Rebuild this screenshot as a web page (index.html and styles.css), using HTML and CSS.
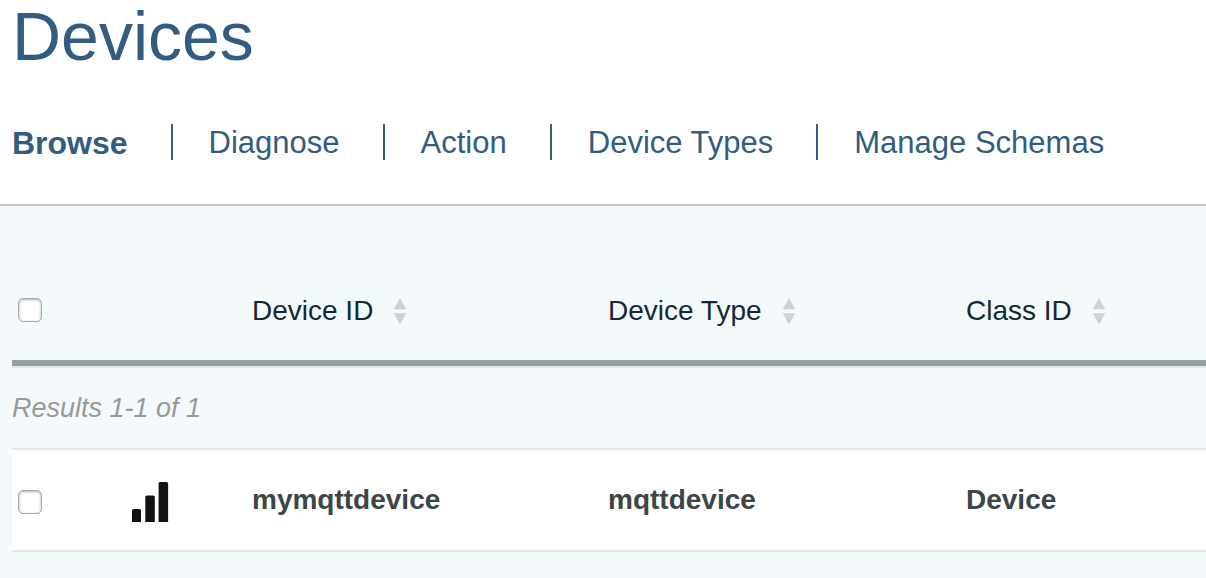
FILE: index.html
```html
<!DOCTYPE html>
<html lang="en">
<head>
<meta charset="utf-8">
<title>Devices</title>
<link rel="stylesheet" href="styles.css">
</head>
<body>
<header class="header">
  <h1 class="title">Devices</h1>
  <nav class="tabs" aria-label="Devices">
    <a class="tab tab-active" href="#browse">Browse</a>
    <a class="tab" href="#diagnose">Diagnose</a>
    <a class="tab" href="#action">Action</a>
    <a class="tab" href="#types">Device Types</a>
    <a class="tab" href="#schemas">Manage Schemas</a>
  </nav>
</header>
<main class="content">
  <table class="devices">
    <colgroup><col class="col-check"><col class="col-icon"><col class="col-id"><col class="col-type"><col></colgroup>
    <thead>
      <tr>
        <th><input class="check" type="checkbox" aria-label="Select all devices"></th>
        <th></th>
        <th><button class="sort">Device ID <svg class="arrows" viewBox="0 0 14 28" aria-hidden="true"><path d="M7 1l6.3 11.3H.7zM7 27.5l6.3-11.2H.7z"/></svg></button></th>
        <th><button class="sort">Device Type <svg class="arrows" viewBox="0 0 14 28" aria-hidden="true"><path d="M7 1l6.3 11.3H.7zM7 27.5l6.3-11.2H.7z"/></svg></button></th>
        <th><button class="sort">Class ID <svg class="arrows" viewBox="0 0 14 28" aria-hidden="true"><path d="M7 1l6.3 11.3H.7zM7 27.5l6.3-11.2H.7z"/></svg></button></th>
      </tr>
    </thead>
    <tbody>
      <tr class="summary"><td colspan="5">Results 1-1 of 1</td></tr>
      <tr class="device">
        <td><input class="check" type="checkbox" aria-label="Select mymqttdevice"></td>
        <td><svg class="signal" viewBox="0 0 38 42" aria-hidden="true"><path d="M0 41V29.500q0-1.500 1.500-1.500h6q1.500 0 1.500 1.500V41zM13.300 41V16q0-1.500 1.500-1.500h6.500q1.500 0 1.500 1.500v25zM26.600 41V2.500Q26.600 1 28.100 1h6.500q1.500 0 1.500 1.500V41z"/></svg></td>
        <td>mymqttdevice</td>
        <td>mqttdevice</td>
        <td>Device</td>
      </tr>
    </tbody>
  </table>
</main>
</body>
</html>
```
FILE: styles.css
```css
* { box-sizing: border-box; }
body {
  margin: 0;
  min-height: 100vh;
  background: #f4f9fc;
  font-family: "Liberation Sans", Arial, sans-serif;
}
.header {
  padding: 0 12px 44px;
  background: #fff;
  border-bottom: 2px solid #c8c8c8;
}
.title {
  margin: 0;
  padding-bottom: 52px;
  font-size: 68px;
  line-height: 72px;
  font-weight: 400;
  color: #325c80;
}
.tabs { display: flex; }
.tab {
  padding-top: 2px;
  font-size: 31px;
  line-height: 34px;
  color: #325c80;
  text-decoration: none;
  white-space: nowrap;
}
.tab + .tab {
  margin-left: 43px;
  padding-left: 36px;
  border-left: 2px solid #325c80;
}
.tab-active {
  font-size: 32px;
  font-weight: 700;
}
.content { padding: 54px 0 0 12px; }
.devices {
  width: 100%;
  table-layout: fixed;
  border-collapse: separate;
  border-spacing: 0;
}
.col-check { width: 120px; }
.col-icon { width: 120px; }
.col-id { width: 356px; }
.col-type { width: 358px; }
th, td { padding: 0; text-align: left; }
th {
  height: 106px;
  border-bottom: 6px solid #96a0a0;
}
.sort {
  display: flex;
  align-items: center;
  gap: 20px;
  padding: 2px 0 0;
  border: 0;
  background: none;
  font: inherit;
  font-size: 28px;
  font-weight: 400;
  line-height: 36px;
  color: #152935;
}
.arrows { width: 14px; height: 28px; fill: #ced2d2; }
.check {
  appearance: none;
  display: block;
  width: 24px;
  height: 24px;
  margin: 0 0 0 6px;
  border: 1px solid #a9a9a9;
  border-radius: 5px;
  background: #fff;
  box-shadow: inset 0 1px 3px #b0b0b0;
}
.summary td {
  height: 82px;
  border-top: 2px solid #e6e6e6;
  font-size: 27px;
  font-style: italic;
  color: #999;
}
.device td {
  height: 104px;
  background: #fff;
  border-top: 2px solid #e6e6e6;
  border-bottom: 2px solid #e6e6e6;
  font-size: 28px;
  font-weight: 700;
  color: #3c4646;
}
.device .check { margin-top: 4px; }
.signal {
  display: block;
  width: 38px;
  height: 42px;
  margin-top: 4px;
  fill: #121212;
}
```
